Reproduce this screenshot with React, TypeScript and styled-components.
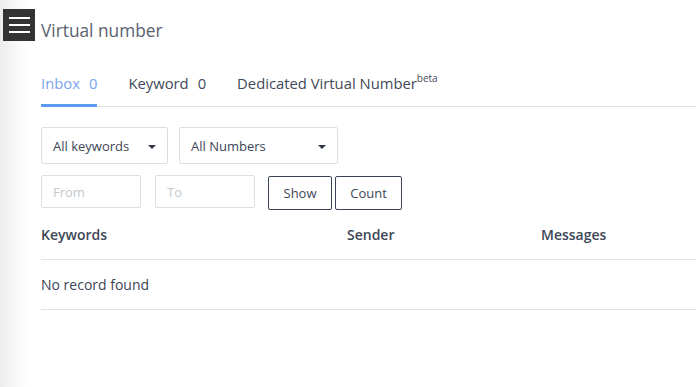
import * as React from 'react'
import styled, { createGlobalStyle } from 'styled-components'

const GlobalStyle = createGlobalStyle`
  html, body {
    margin: 0;
    padding: 0;
    height: 100%;
    background: linear-gradient(to right, #ececec 0px, #f7f7f7 14px, #ffffff 28px);
    font-family: 'Open Sans', 'Liberation Sans', sans-serif;
    color: #3d4656;
  }
`

const tabs = [
  { label: 'Inbox', count: '0', active: true },
  { label: 'Keyword', count: '0', active: false },
  { label: 'Dedicated Virtual Number', beta: true, active: false },
]

const App = () => {
  return (
    <>
      <GlobalStyle />
      <Page>
        <Header>
          <MenuButton aria-label="menu">
            <Bar />
            <Bar />
            <Bar />
          </MenuButton>
          <Title>Virtual number</Title>
        </Header>

        <Content>
          <Tabs>
            {tabs.map((t) => (
              <Tab key={t.label} $active={t.active}>
                {t.label}
                {t.count && <Count>{t.count}</Count>}
                {t.beta && <sup>beta</sup>}
              </Tab>
            ))}
          </Tabs>

          <Filters>
            <Select $width={127}>
              All keywords
              <Caret />
            </Select>
            <Select $width={159}>
              All Numbers
              <Caret />
            </Select>
          </Filters>

          <DateRow>
            <DateInput placeholder="From" />
            <DateInput placeholder="To" />
            <Buttons>
              <OutlineButton $width={64}>Show</OutlineButton>
              <OutlineButton $width={67}>Count</OutlineButton>
            </Buttons>
          </DateRow>

          <Table>
            <HeadRow>
              <HeadCell>Keywords</HeadCell>
              <HeadCell>Sender</HeadCell>
              <HeadCell>Messages</HeadCell>
            </HeadRow>
            <EmptyRow>No record found</EmptyRow>
          </Table>
        </Content>
      </Page>
    </>
  )
}

export default App

// Styles
const Page = styled.div`
  padding: 9px 0 0 3px;
`

const Header = styled.div`
  display: flex;
  align-items: flex-start;
  gap: 6px;
  height: 32px;
`

const MenuButton = styled.div`
  width: 32px;
  height: 32px;
  background: #333333;
  display: flex;
  flex-direction: column;
  justify-content: center;
  align-items: center;
  gap: 5px;
  box-sizing: border-box;
`

const Bar = styled.span`
  display: block;
  width: 21px;
  height: 2px;
  background: #ffffff;
`

const Title = styled.h1`
  margin: 12px 0 0;
  font-size: 17.3px;
  font-weight: 400;
  color: #5a6270;
  line-height: 20px;
`

const Content = styled.div`
  padding-left: 38px;
`

const Tabs = styled.div`
  display: flex;
  gap: 31px;
  margin-top: 29px;
  border-bottom: 1px solid #e3e3e3;
`

const Tab = styled.div<{ $active?: boolean }>`
  font-size: 14.8px;
  color: ${(p) => (p.$active ? '#79a4ef' : '#3f4959')};
  padding: 3px 0 9px;
  line-height: 20px;
  border-bottom: 3px solid ${(p) => (p.$active ? '#5b9aee' : 'transparent')};
  margin-bottom: -1px;

  sup {
    font-size: 10px;
    vertical-align: 0;
    position: relative;
    top: -7px;
  }
`

const Count = styled.span`
  margin-left: 9px;
`

const Filters = styled.div`
  display: flex;
  gap: 11px;
  margin-top: 20px;
`

const Select = styled.div<{ $width: number }>`
  width: ${(p) => p.$width}px;
  height: 37px;
  box-sizing: border-box;
  border: 1px solid #dedede;
  border-radius: 2px;
  display: flex;
  align-items: center;
  justify-content: space-between;
  padding: 0 11px 0 11px;
  font-size: 13px;
  color: #3d4656;
`

const Caret = styled.span`
  width: 0;
  height: 0;
  border-left: 4px solid transparent;
  border-right: 4px solid transparent;
  border-top: 4px solid #2f3744;
  margin-top: 3px;
`

const DateRow = styled.div`
  display: flex;
  align-items: flex-start;
  gap: 14px;
  margin-top: 11px;
`

const DateInput = styled.input`
  width: 100px;
  height: 33px;
  box-sizing: border-box;
  border: 1px solid #dedede;
  border-radius: 2px;
  padding: 0 11px;
  font-family: inherit;
  font-size: 13px;
  color: #3d4656;
  outline: none;

  &::placeholder {
    color: #c4c8d0;
  }
`

const Buttons = styled.div`
  display: flex;
  gap: 3px;
  margin: 1px 0 0 -1px;
`

const OutlineButton = styled.button<{ $width: number }>`
  width: ${(p) => p.$width}px;
  height: 34px;
  box-sizing: border-box;
  background: #ffffff;
  border: 1px solid #3b4557;
  border-radius: 2px;
  font-family: inherit;
  font-size: 13px;
  color: #3d4656;
  padding: 0;
  cursor: pointer;
`

const Table = styled.div`
  margin-top: 0;
`

const HeadRow = styled.div`
  display: grid;
  grid-template-columns: 306px 194px 1fr;
  height: 49px;
  align-items: center;
  border-bottom: 1px solid #e3e3e3;
`

const HeadCell = styled.div`
  font-size: 14px;
  font-weight: 600;
  color: #3d4656;
`

const EmptyRow = styled.div`
  height: 49px;
  display: flex;
  align-items: center;
  font-size: 14px;
  color: #3d4656;
  border-bottom: 1px solid #e3e3e3;
`
